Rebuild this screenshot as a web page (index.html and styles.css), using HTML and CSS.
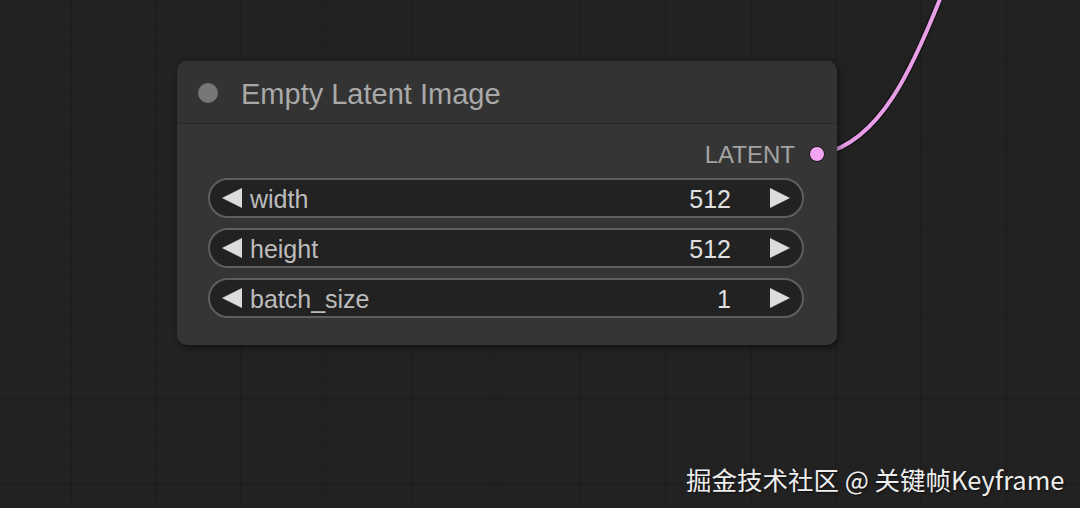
FILE: index.html
```html
<!DOCTYPE html>
<html>
<head>
<meta charset="utf-8">
<link rel="stylesheet" href="styles.css">
</head>
<body>
<div class="canvas">
  <svg class="link" width="1080" height="508" viewBox="0 0 1080 508">
    <path class="link-shadow" d="M 822 154 C 880 141, 912 70, 942 -6"/>
    <path class="link-line" d="M 822 154 C 880 141, 912 70, 942 -6"/>
  </svg>
  <div class="node">
    <div class="node-title">
      <span class="node-dot"></span>
      <span class="node-name">Empty Latent Image</span>
    </div>
    <div class="node-body">
      <div class="output-row">
        <span class="output-label">LATENT</span>
      </div>
      <div class="widget">
        <span class="arrow arrow-left"></span>
        <span class="w-label">width</span>
        <span class="w-value">512</span>
        <span class="arrow arrow-right"></span>
      </div>
      <div class="widget">
        <span class="arrow arrow-left"></span>
        <span class="w-label">height</span>
        <span class="w-value">512</span>
        <span class="arrow arrow-right"></span>
      </div>
      <div class="widget">
        <span class="arrow arrow-left"></span>
        <span class="w-label">batch_size</span>
        <span class="w-value">1</span>
        <span class="arrow arrow-right"></span>
      </div>
    </div>
    <span class="output-dot"></span>
  </div>
  <div class="watermark">掘金技术社区 @ 关键帧Keyframe</div>
</div>
</body>
</html>
```
FILE: styles.css
```css
html, body {
  margin: 0;
  padding: 0;
  background: #222222;
}
.canvas {
  position: relative;
  width: 1080px;
  height: 508px;
  overflow: hidden;
  background-color: #222222;
  background-image:
    linear-gradient(to right, rgba(0,0,0,0.10) 2px, transparent 2px),
    linear-gradient(to bottom, rgba(0,0,0,0.10) 2px, transparent 2px),
    linear-gradient(to right, rgba(0,0,0,0.04) 1px, transparent 1px),
    linear-gradient(to bottom, rgba(0,0,0,0.04) 1px, transparent 1px);
  background-size: 85px 85px, 85px 85px, 21px 21px, 21px 21px;
  background-position: 70px 58px, 70px 58px, 7px 5px, 7px 5px;
  font-family: "Liberation Sans", Arial, sans-serif;
}
.link {
  position: absolute;
  left: 0;
  top: 0;
}
.link-shadow {
  fill: none;
  stroke: #161616;
  stroke-width: 7;
}
.link-line {
  fill: none;
  stroke: #e89ee8;
  stroke-width: 4;
}
.node {
  position: absolute;
  left: 177px;
  top: 61px;
  width: 660px;
  height: 284px;
  box-sizing: border-box;
  background: #353535;
  border-radius: 10px;
  box-shadow: 2px 3px 6px rgba(0,0,0,0.45);
  display: flex;
  flex-direction: column;
}
.node-title {
  height: 63px;
  box-sizing: border-box;
  background: #333333;
  border-radius: 10px 10px 0 0;
  border-bottom: 1px solid #2a2a2a;
  display: flex;
  align-items: center;
  padding-left: 21px;
}
.node-dot {
  width: 20px;
  height: 20px;
  border-radius: 50%;
  background: #767676;
  margin-right: 23px;
  margin-top: 2px;
}
.node-name {
  font-size: 29px;
  color: #a9a9a9;
  margin-top: 4px;
}
.node-body {
  padding: 16px 33px 0 31px;
  display: flex;
  flex-direction: column;
  gap: 10px;
}
.output-row {
  height: 26px;
  display: flex;
  justify-content: flex-end;
  align-items: center;
  padding-right: 9px;
  margin-bottom: 2px;
}
.output-label {
  font-size: 24px;
  color: #a3a3a3;
  margin-top: 4px;
}
.output-dot {
  position: absolute;
  left: 632px;
  top: 85px;
  width: 16px;
  height: 16px;
  box-sizing: border-box;
  border-radius: 50%;
  background: #f2a6f2;
  border: 1.5px solid #161616;
}
.widget {
  height: 40px;
  box-sizing: border-box;
  border: 2px solid #5e5e5e;
  border-radius: 20px;
  background: #222222;
  display: flex;
  align-items: center;
  padding: 0 12px 0 12px;
}
.arrow {
  width: 0;
  height: 0;
  border-top: 10px solid transparent;
  border-bottom: 10px solid transparent;
}
.arrow-left {
  border-right: 20px solid #dcdcdc;
  margin-right: 8px;
}
.arrow-right {
  border-left: 20px solid #dcdcdc;
  margin-left: 39px;
}
.w-label {
  font-size: 25px;
  color: #bcbcbc;
  flex: 1;
  margin-top: 2px;
}
.w-value {
  font-size: 25px;
  color: #e0e0e0;
  margin-top: 2px;
}
.watermark {
  position: absolute;
  left: 686px;
  top: 460px;
  font-family: "Noto Sans CJK SC", "Noto Sans", sans-serif;
  font-size: 25.5px;
  color: #eeeeee;
  text-shadow: 1px 1px 2px rgba(0,0,0,0.6);
  white-space: nowrap;
}
```
